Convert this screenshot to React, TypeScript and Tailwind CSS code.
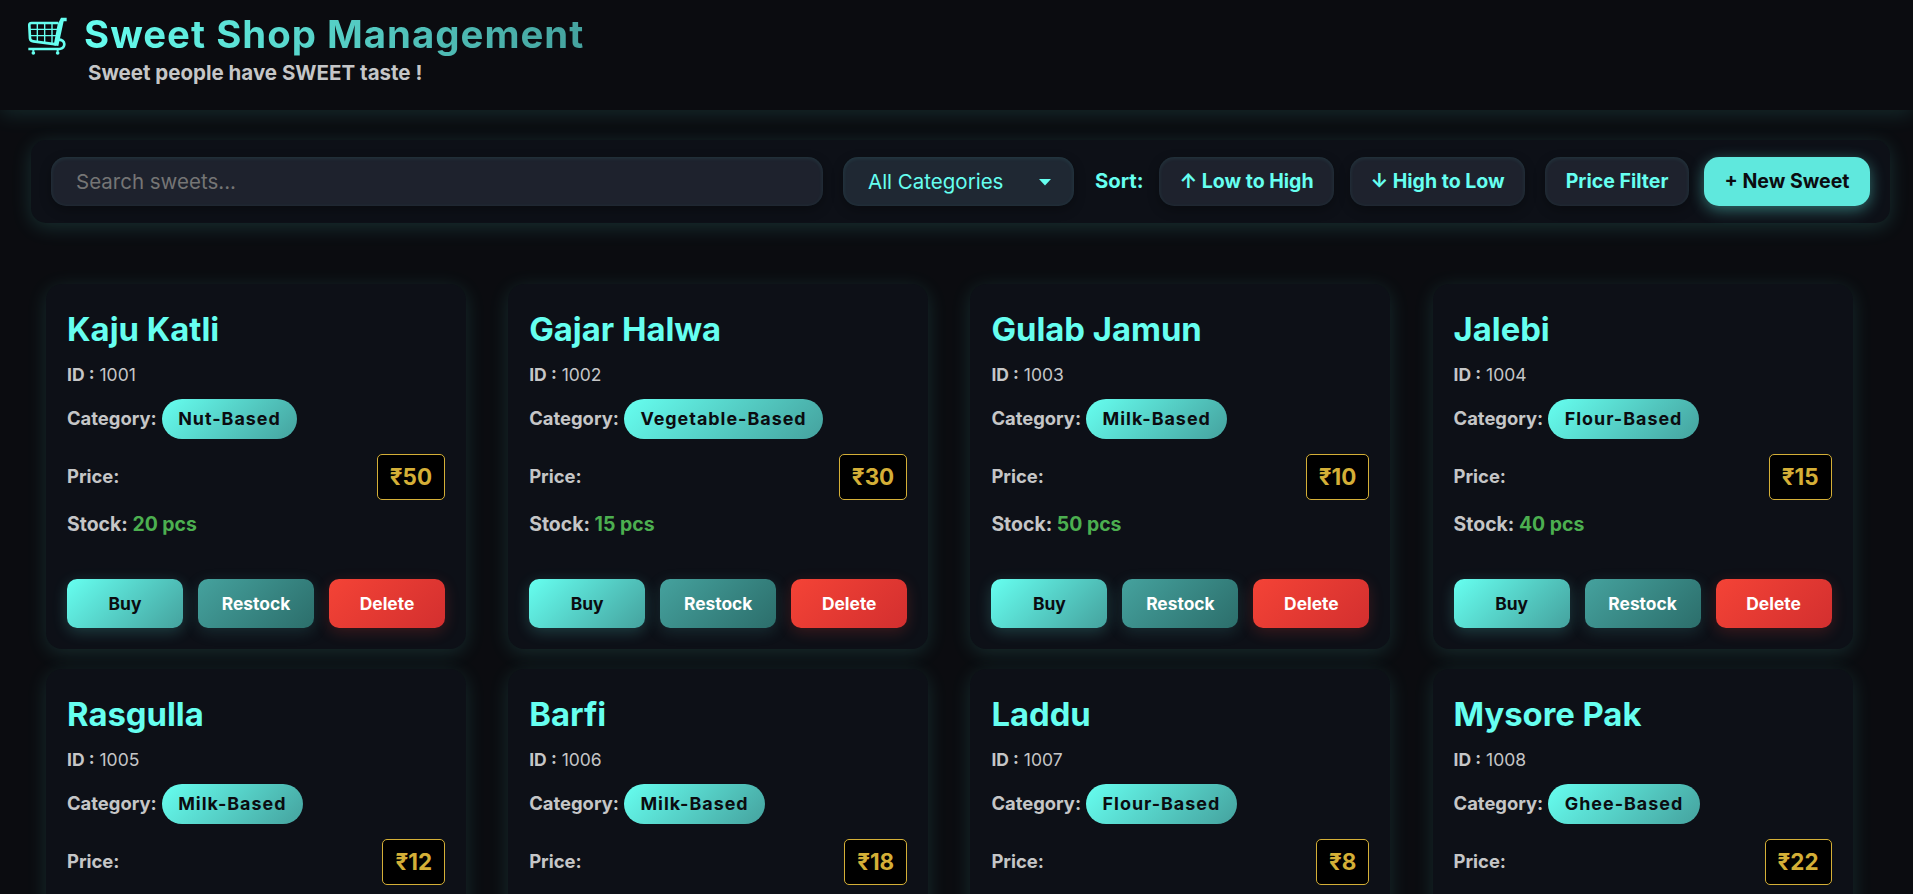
type Sweet = { id: number; name: string; category: string; price: number; stock: number };

const sweets: Sweet[] = [
  { id: 1001, name: "Kaju Katli", category: "Nut-Based", price: 50, stock: 20 },
  { id: 1002, name: "Gajar Halwa", category: "Vegetable-Based", price: 30, stock: 15 },
  { id: 1003, name: "Gulab Jamun", category: "Milk-Based", price: 10, stock: 50 },
  { id: 1004, name: "Jalebi", category: "Flour-Based", price: 15, stock: 40 },
  { id: 1005, name: "Rasgulla", category: "Milk-Based", price: 12, stock: 30 },
  { id: 1006, name: "Barfi", category: "Milk-Based", price: 18, stock: 25 },
  { id: 1007, name: "Laddu", category: "Flour-Based", price: 8, stock: 60 },
  { id: 1008, name: "Mysore Pak", category: "Ghee-Based", price: 22, stock: 35 },
];

const control =
  "h-[49px] shrink-0 rounded-[15px] bg-[#1e222d] shadow-[0_4px_12px_rgba(0,0,0,0.3),inset_0_1px_4px_rgba(102,252,241,0.1)]";

function CartIcon() {
  return (
    <svg viewBox="10 20 120 114" className="mt-[9px] h-[38px] w-[40px] shrink-0 text-[#66fff0]" fill="none" stroke="currentColor">
      <path d="M104 38H24Q16 38 17 46L19 84Q20 92 29 93L98 102" strokeWidth="8" strokeLinejoin="round" />
      <path d="M41 38V94M63 38V97M85 38V99M18 57H104M19 76H101" strokeWidth="4.2" />
      <path d="M112 22H129V33H120L104 107L90 105L102 42Z" fill="currentColor" stroke="none" />
      <path d="M103 88Q121 88 122 101Q122 114 108 116H14" strokeWidth="8" />
      <path d="M29 116V124M102 116V124" strokeWidth="6" />
      <circle cx="29" cy="128" r="5.5" fill="currentColor" stroke="none" />
      <circle cx="102" cy="128" r="5.5" fill="currentColor" stroke="none" />
    </svg>
  );
}

function Header() {
  return (
    <header className="flex h-[110px] shrink-0 items-start bg-[#0b0c10] pl-[27px] pt-[8px] shadow-[0_4px_20px_rgba(102,252,241,0.12)]">
      <CartIcon />
      <div className="ml-[17px] flex flex-col items-start">
        <h1 className="bg-linear-to-r from-[#66fff0] to-[#45a29e] bg-clip-text text-[38.4px] font-bold leading-[52px] tracking-[1px] text-transparent">
          Sweet Shop Management
        </h1>
        <p className="ml-[4px] mt-[1px] text-[20.5px] font-bold leading-[24px] text-[#c5c6c7]">
          Sweet people have SWEET taste !
        </p>
      </div>
    </header>
  );
}

function Toolbar() {
  return (
    <section className="ml-[31px] mr-[23px] mt-[30px] flex h-[83px] shrink-0 items-center rounded-[15px] bg-[#0d1017] px-[20px] text-[19.55px] shadow-[0_4px_20px_rgba(102,252,241,0.15)]">
      <input
        placeholder="Search sweets..."
        className={`${control} w-[772px] px-[25px] text-[20.5px] outline-none placeholder:text-[#757575]`}
      />
      <button className="ml-[20px] flex h-[49px] w-[231px] shrink-0 items-center justify-between rounded-[15px] bg-[#1f2833] pl-[25px] pr-[23px] pt-[2px] text-[20.5px] text-[#66fff0] shadow-[0_4px_12px_rgba(0,0,0,0.3),inset_0_1px_4px_rgba(102,252,241,0.1)]">
        All Categories
        <svg viewBox="0 0 12 7" className="h-[7px] w-[12px] fill-current">
          <path d="M0 0h12L6 6.5z" />
        </svg>
      </button>
      <span className="ml-[21px] w-[64px] text-[20.3px] font-bold text-[#66fff0]">Sort:</span>
      <button className={`${control} w-[175px] font-bold text-[#66fff0]`}>↑ Low to High</button>
      <button className={`${control} ml-[16px] w-[175px] font-bold text-[#66fff0]`}>↓ High to Low</button>
      <button className={`${control} ml-[20px] w-[144px] font-bold text-[#66fff0]`}>Price Filter</button>
      <button className="ml-[15px] h-[49px] w-[166px] shrink-0 rounded-[15px] bg-[#5fe8dd] font-bold text-[#0b0c10] shadow-[0_4px_15px_rgba(102,252,241,0.4)]">
        + New Sweet
      </button>
    </section>
  );
}

function Card({ sweet }: { sweet: Sweet }) {
  return (
    <article className="flex h-[365px] w-[420px] flex-col rounded-[16px] bg-[#0d1017] px-[21px] pt-[21px] text-[#c5c6c7] shadow-[0_4px_20px_rgba(102,252,241,0.13)]">
      <h2 className="h-[48px] text-[32.8px] font-bold leading-[48px] text-[#66fff0]">{sweet.name}</h2>
      <p className="mt-[9px] h-[26px] text-[17.5px] leading-[26px]">
        <span className="font-bold">ID :</span> {sweet.id}
      </p>
      <div className="mt-[11px] flex h-[40px] items-center">
        <span className="text-[18.4px] font-bold">Category:</span>
        <span className="ml-[5px] flex h-[40px] items-center rounded-full bg-linear-135 from-[#66fff0] to-[#45a29e] px-[16.5px] text-[17.9px] font-bold tracking-[1px] text-[#0b0c10]">
          {sweet.category}
        </span>
      </div>
      <div className="mt-[15px] flex h-[46px] items-center justify-between">
        <span className="text-[18.4px] font-bold">Price:</span>
        <span className="flex h-[46px] items-center rounded-[5px] border border-[#d4af37] bg-black px-[12px] text-[22.4px] font-bold text-[#d4af37]">
          ₹{sweet.price}
        </span>
      </div>
      <p className="mt-[10px] h-[28px] text-[19.45px] font-bold leading-[28px]">
        Stock: <span className="text-[#4caf50]">{sweet.stock} pcs</span>
      </p>
      <div className="mt-[41px] grid h-[49px] grid-cols-3 gap-[15px] text-[17.4px] font-bold">
        <button className="rounded-[10px] bg-linear-135 from-[#66fff0] to-[#45a29e] pt-[2px] text-[#0b0c10] shadow-[0_4px_15px_rgba(102,252,241,0.2)]">
          Buy
        </button>
        <button className="rounded-[10px] bg-linear-135 from-[#45a29e] to-[#2c6e6b] pt-[2px] text-white shadow-[0_4px_15px_rgba(69,162,158,0.2)]">
          Restock
        </button>
        <button className="rounded-[10px] bg-linear-135 from-[#f44336] to-[#d32f2f] pt-[2px] text-white shadow-[0_4px_15px_rgba(244,67,54,0.2)]">
          Delete
        </button>
      </div>
    </article>
  );
}

export default function App() {
  return (
    <div className="flex h-screen w-full flex-col overflow-hidden bg-[#0b0c10] font-['Inter',sans-serif]">
      <Header />
      <Toolbar />
      <main className="ml-[46px] mt-[61px] grid w-[1806.6px] shrink-0 grid-cols-[repeat(4,420px)] justify-between gap-y-[20px]">
        {sweets.map((s) => (
          <Card key={s.id} sweet={s} />
        ))}
      </main>
    </div>
  );
}
